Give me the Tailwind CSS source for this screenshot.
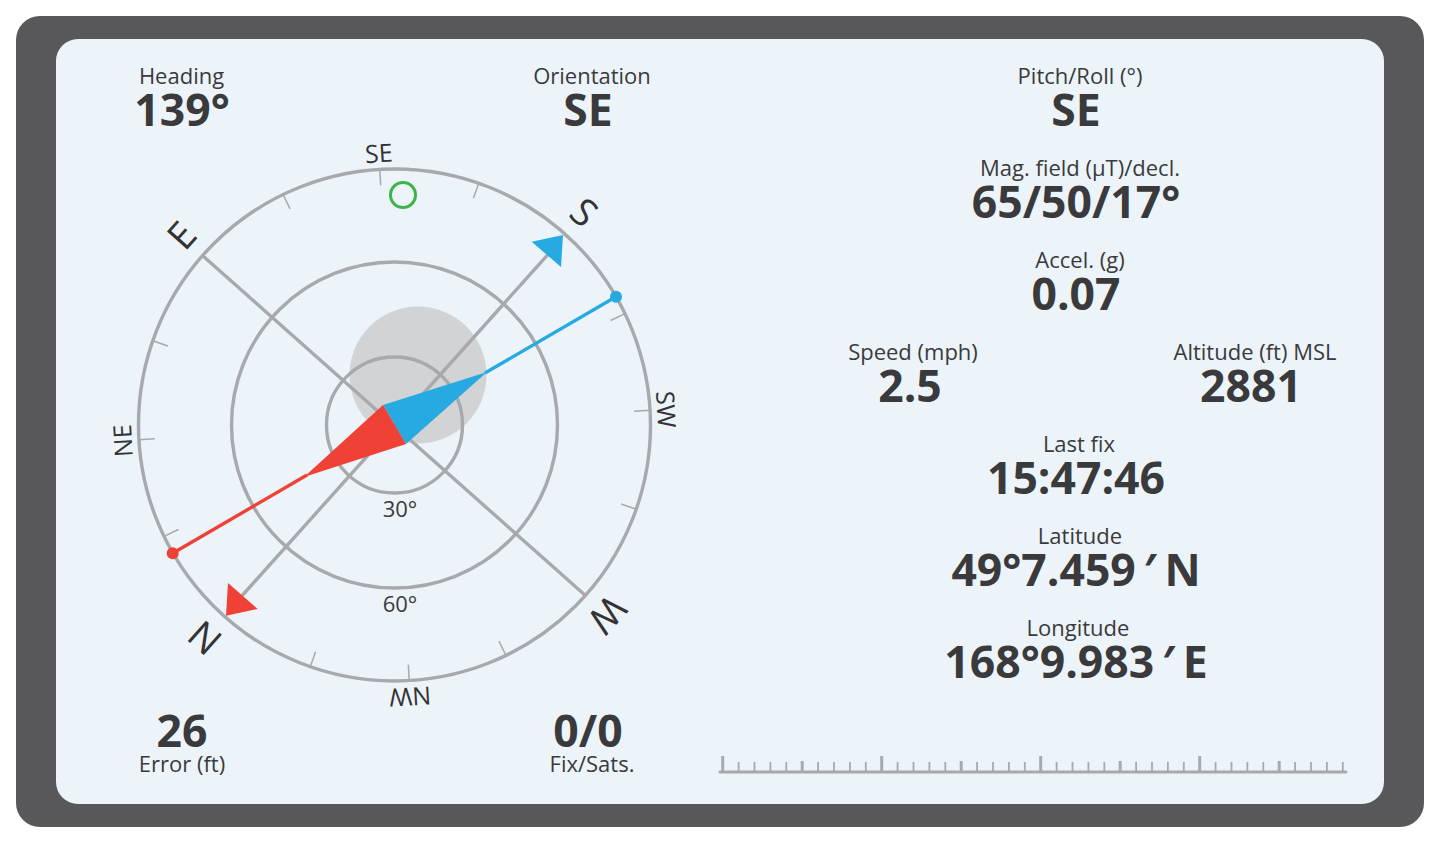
<!DOCTYPE html>
<html lang="en">
<head>
  <meta charset="UTF-8" />
  <title>GPS Compass</title>
  <script src="https://cdn.jsdelivr.net/npm/@tailwindcss/browser@4"></script>
</head>
<body class="bg-white font-['Open_Sans',sans-serif] text-[#3a3a3c] overflow-hidden">
  <div class="w-[1440px] h-[843px] p-4">
    <div class="h-[811px] bg-[#58585a] rounded-[24px] px-10 py-[23px]">
      <div class="h-[765px] bg-[#ecf4fa] rounded-[22px] flex">

        <!-- left: compass -->
        <div class="w-[660px] pt-[24px] flex flex-col">
          <div class="grid grid-cols-[252px_252px] gap-[154px]">
            <div class="text-center">
              <div class="text-[22px] leading-[25px] pr-px">Heading</div>
              <div class="text-[44.5px] leading-[42px] font-bold">139°</div>
            </div>
            <div class="text-center">
              <div class="text-[22px] leading-[25px] pl-2">Orientation</div>
              <div class="text-[44.5px] leading-[42px] font-bold">SE</div>
            </div>
          </div>

          <svg id="compass" class="block ml-[44px] shrink-0 overflow-visible" width="590" height="579" viewBox="100 130 590 579">
            <circle cx="418" cy="375" r="68.5" fill="#d1d3d4" />
            <g fill="none" stroke="#a7a9ac" stroke-width="3.4">
              <circle cx="394.5" cy="425" r="256" />
              <circle cx="394.5" cy="425" r="163" />
              <circle cx="394.5" cy="425" r="68" />
              <line x1="203" y1="256" x2="586" y2="596" />
              <line x1="240" y1="598" x2="552" y2="250" />
            </g>
            <g id="ticks" stroke="#a7a9ac" stroke-width="1.5"></g>
            <g id="labels" fill="#333335"></g>
            <circle cx="403" cy="195" r="12.5" fill="none" stroke="#39b54a" stroke-width="3" />
            <polygon points="563,235 531.7,241.7 561,267" fill="#27aae1" />
            <polygon points="226,615.7 228,583 257.7,609" fill="#ef4136" />
            <line x1="485" y1="373" x2="616" y2="296.7" stroke="#27aae1" stroke-width="3.4" />
            <circle cx="616" cy="296.7" r="6" fill="#27aae1" />
            <polygon points="383,405 487,372 406,444" fill="#27aae1" />
            <line x1="307" y1="475" x2="172.7" y2="553.3" stroke="#ef4136" stroke-width="3.4" />
            <circle cx="172.7" cy="553.3" r="6" fill="#ef4136" />
            <polygon points="383,405 304,477 406,444" fill="#ef4136" />
            <text x="400" y="517" text-anchor="middle" font-size="22" fill="#3a3a3c">30°</text>
            <text x="400" y="612" text-anchor="middle" font-size="22" fill="#3a3a3c">60°</text>
          </svg>

          <div class="grid grid-cols-[252px_252px] gap-[154px]">
            <div class="text-center">
              <div class="text-[44.5px] leading-[42px] font-bold">26</div>
              <div class="text-[22px] leading-[25px]">Error (ft)</div>
            </div>
            <div class="text-center">
              <div class="text-[44.5px] leading-[42px] font-bold">0/0</div>
              <div class="text-[22px] leading-[25px] pl-2">Fix/Sats.</div>
            </div>
          </div>
        </div>

        <!-- right: readouts -->
        <div class="flex-1 pt-[24px] flex flex-col">
          <div class="ml-[52px] flex flex-col items-center gap-[25px] text-center">
            <div>
              <div class="text-[22px] leading-[25px] pl-2">Pitch/Roll (°)</div>
              <div class="text-[44.5px] leading-[42px] font-bold">SE</div>
            </div>
            <div>
              <div class="text-[22px] leading-[25px] pl-2">Mag. field (µT)/decl.</div>
              <div class="text-[44.5px] leading-[42px] font-bold">65/50/17°</div>
            </div>
            <div>
              <div class="text-[22px] leading-[25px] pl-2">Accel. (g)</div>
              <div class="text-[44.5px] leading-[42px] font-bold">0.07</div>
            </div>
            <div class="grid grid-cols-[200px_200px] gap-[141px] ml-[9px]">
              <div>
                <div class="text-[22px] leading-[25px] pl-1.5">Speed (mph)</div>
                <div class="text-[44.5px] leading-[42px] font-bold">2.5</div>
              </div>
              <div>
                <div class="text-[22px] leading-[25px] pl-2 whitespace-nowrap">Altitude (ft) MSL</div>
                <div class="text-[44.5px] leading-[42px] font-bold">2881</div>
              </div>
            </div>
            <div>
              <div class="text-[22px] leading-[25px] pl-1.5">Last fix</div>
              <div class="text-[44.5px] leading-[42px] font-bold">15:47:46</div>
            </div>
            <div>
              <div class="text-[22px] leading-[25px] pl-2">Latitude</div>
              <div class="text-[44.5px] leading-[42px] font-bold">49°7.459 <span class="mx-[-4px]">′</span> N</div>
            </div>
            <div>
              <div class="text-[22px] leading-[25px] pl-1">Longitude</div>
              <div class="text-[44.5px] leading-[42px] font-bold">168°9.983 <span class="mx-[-4px]">′</span> E</div>
            </div>
          </div>
          <svg id="ruler" class="block mt-auto mb-[28px] ml-[2px]" width="632" height="20" viewBox="718 756 632 20"></svg>
        </div>

      </div>
    </div>
  </div>

  <script>
    const NS = 'http://www.w3.org/2000/svg';
    const CX = 394.5, CY = 425, HEADING = 138.3;

    function el(parent, name, attrs, text) {
      const node = document.createElementNS(NS, name);
      for (const k in attrs) node.setAttribute(k, attrs[k]);
      if (text) node.textContent = text;
      parent.appendChild(node);
      return node;
    }

    // compass ticks every 22.5 degrees, except where a cross line sits
    const ticks = document.getElementById('ticks');
    for (let i = 0; i < 16; i++) {
      if (i % 4 === 0) continue;
      const a = (i * 22.5 - HEADING) * Math.PI / 180;
      const s = Math.sin(a), c = -Math.cos(a);
      el(ticks, 'line', { x1: CX + s * 256, y1: CY + c * 256, x2: CX + s * 240, y2: CY + c * 240 });
    }

    const labels = document.getElementById('labels');
    [['N', 0, 285, 38], ['NE', 45, 272, 25], ['E', 90, 285, 38], ['SE', 135, 272, 25],
     ['S', 180, 285, 38], ['SW', 225, 272, 25], ['W', 270, 285, 38], ['NW', 315, 272, 25]].forEach(([t, deg, r, size]) => {
      const d = deg - HEADING, a = d * Math.PI / 180;
      const x = CX + Math.sin(a) * r, y = CY - Math.cos(a) * r;
      el(labels, 'text', {
        x: x, y: y + size * 0.357, 'text-anchor': 'middle', 'font-size': size,
        transform: `rotate(${d} ${x} ${y})`
      }, t);
    });

    // ruler along the bottom
    const ruler = document.getElementById('ruler');
    el(ruler, 'line', { x1: 720, y1: 772, x2: 1346, y2: 772, stroke: '#a7a9ac', 'stroke-width': 3, 'stroke-linecap': 'round' });
    for (let i = 0; i <= 39; i++) {
      const x = 722.7 + i * 15.9;
      const major = i % 10 === 0, mid = i % 5 === 0;
      el(ruler, 'line', {
        x1: x, y1: 772, x2: x, y2: major ? 756 : mid ? 761 : 762,
        stroke: '#a7a9ac', 'stroke-width': mid ? 3 : 1.8
      });
    }
  </script>
</body>
</html>
